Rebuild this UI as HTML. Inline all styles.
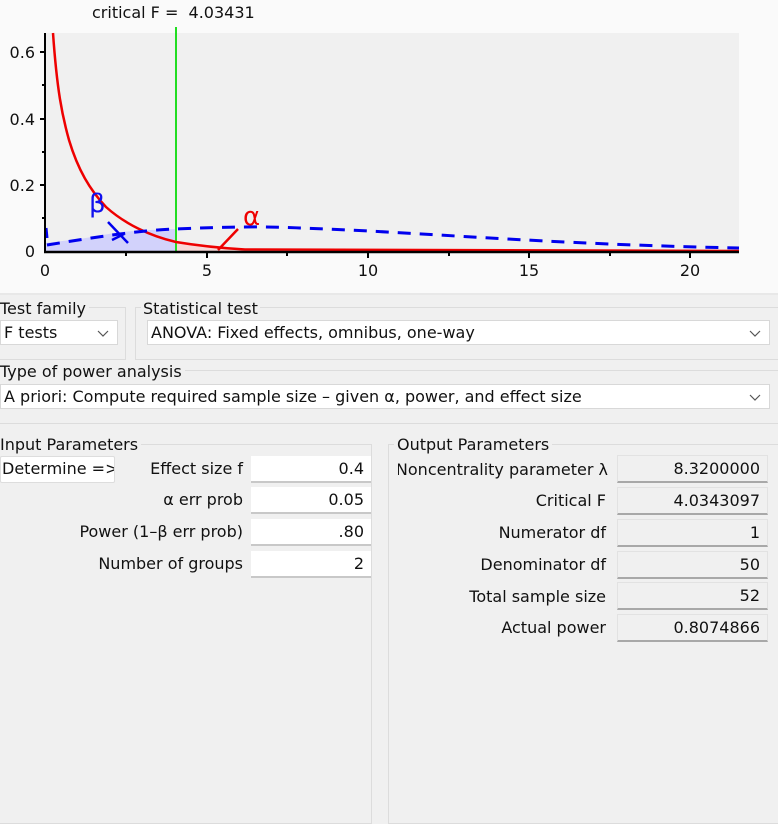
<!DOCTYPE html>
<html><head><meta charset="utf-8"><style>
*{margin:0;padding:0;box-sizing:border-box}
body{width:778px;height:806px;overflow:hidden;background:#f0f0f0;font-family:"DejaVu Sans","Liberation Sans",sans-serif;font-size:16px;color:#111;position:relative}
.a{position:absolute;white-space:nowrap}
.box{position:absolute;border:1px solid #dcdcdc}
.combo{position:absolute;background:#fff;border:1px solid #d8d8d8;height:25px;line-height:23px;padding-left:3px;white-space:nowrap;overflow:hidden}
.combo svg{position:absolute;right:8px;top:9px}
.in{position:absolute;background:#fff;border-bottom:2px solid #c8c8c8;height:27px;line-height:25px;text-align:right;padding-right:7px;width:120px;left:251px}
.out{position:absolute;background:#f0f0f0;border:1px solid #e2e2e2;border-bottom:2px solid #a8a8a8;height:28px;line-height:25px;text-align:right;padding-right:7px;width:151px;left:617px}
.lbl{position:absolute;text-align:right;height:27px;line-height:27px;white-space:nowrap}
</style></head><body>
<div class="a" style="left:0;top:0;width:778px;height:293px;background:#fafafa"></div>
<div class="a" style="left:0;top:293px;width:778px;height:2px;background:#e8e8e8"></div>
<div class="a" style="left:92px;top:3px;font-size:16px">critical F =&nbsp; 4.03431</div>
<svg class="a" style="left:0;top:0" width="778" height="290" viewBox="0 0 778 290">
<rect x="45" y="33" width="694" height="218" fill="#f0f0f0"/>
<path d="M45,243 L80,239 L120,232 L150,230 L176,229 L176,251 L45,251Z" fill="#d2d2fb"/>
<path d="M176,229 L176,242 L200,245 L230,248 L260,250 L300,251 L176,251Z" fill="#f8d8d8"/>
<line x1="176" y1="27" x2="176" y2="251" stroke="#22dd22" stroke-width="2"/>
<path d="M53,33 C57,90 62,115 69,140 C78,170 90,190 106,207 C125,224 150,236 176,242 C200,246 220,248 245,249.5 C300,250.8 400,251 739,251" fill="none" stroke="#ee0000" stroke-width="2.5"/>
<path d="M47,245 C90,238 140,230 176,229 C220,227 260,226 300,228 C360,230 420,234 490,238 C560,242 640,246 739,248" fill="none" stroke="#0000ee" stroke-width="3" stroke-dasharray="13,9"/>
<line x1="46" y1="228" x2="47" y2="238" stroke="#0000ee" stroke-width="3"/>
<line x1="108" y1="222" x2="128" y2="243" stroke="#0000ee" stroke-width="2.5"/>
<line x1="112" y1="240" x2="124" y2="234" stroke="#0000ee" stroke-width="2.5"/>
<line x1="238" y1="229" x2="218" y2="250" stroke="#ee0000" stroke-width="2.5"/>
<text x="89" y="212" font-family="DejaVu Sans,sans-serif" font-size="26" fill="#1010ee">β</text>
<text x="243" y="225" font-family="DejaVu Sans,sans-serif" font-size="26" fill="#ee0000">α</text>
<line x1="45" y1="33" x2="45" y2="252" stroke="#000" stroke-width="2"/>
<line x1="44" y1="252" x2="739" y2="252" stroke="#000" stroke-width="2.5"/>
<g stroke="#000" stroke-width="2">
<line x1="40" y1="52" x2="45" y2="52"/><line x1="40" y1="119" x2="45" y2="119"/><line x1="40" y1="185" x2="45" y2="185"/>
<line x1="42" y1="85" x2="45" y2="85"/><line x1="42" y1="152" x2="45" y2="152"/><line x1="42" y1="218" x2="45" y2="218"/>
<line x1="207" y1="252" x2="207" y2="258"/><line x1="368" y1="252" x2="368" y2="258"/><line x1="529" y1="252" x2="529" y2="258"/><line x1="690" y1="252" x2="690" y2="258"/>
<line x1="126" y1="252" x2="126" y2="256"/><line x1="287" y1="252" x2="287" y2="256"/><line x1="449" y1="252" x2="449" y2="256"/><line x1="610" y1="252" x2="610" y2="256"/>
</g>
<g font-family="DejaVu Sans,sans-serif" font-size="16" fill="#111">
<text x="35" y="58" text-anchor="end">0.6</text><text x="35" y="125" text-anchor="end">0.4</text><text x="35" y="191" text-anchor="end">0.2</text><text x="35" y="257" text-anchor="end">0</text>
<text x="45" y="276" text-anchor="middle">0</text><text x="207" y="276" text-anchor="middle">5</text><text x="368" y="276" text-anchor="middle">10</text><text x="529" y="276" text-anchor="middle">15</text><text x="690" y="276" text-anchor="middle">20</text>
</g>
</svg>

<div class="box" style="left:-2px;top:307px;width:128px;height:53px"></div>
<div class="a" style="left:0;top:299px;background:#f0f0f0;padding-right:3px">Test family</div>
<div class="combo" style="left:0;top:320px;width:118px">F tests<svg width="12" height="7"><path d="M1,1 L6,6 L11,1" fill="none" stroke="#555" stroke-width="1.2"/></svg></div>
<div class="box" style="left:135px;top:307px;width:650px;height:53px"></div>
<div class="a" style="left:141px;top:299px;background:#f0f0f0;padding:0 2px">Statistical test</div>
<div class="combo" style="left:147px;top:320px;width:623px">ANOVA: Fixed effects, omnibus, one-way<svg width="12" height="7"><path d="M1,1 L6,6 L11,1" fill="none" stroke="#555" stroke-width="1.2"/></svg></div>
<div class="box" style="left:-2px;top:370px;width:790px;height:54px"></div>
<div class="a" style="left:0;top:362px;background:#f0f0f0;padding-right:3px">Type of power analysis</div>
<div class="combo" style="left:0;top:384px;width:770px">A priori: Compute required sample size – given α, power, and effect size<svg width="12" height="7"><path d="M1,1 L6,6 L11,1" fill="none" stroke="#555" stroke-width="1.2"/></svg></div>

<div class="box" style="left:-2px;top:444px;width:374px;height:380px"></div>
<div class="a" style="left:0;top:435px;background:#f0f0f0;padding-right:3px">Input Parameters</div>
<div class="a" style="left:0;top:456px;width:115px;height:27px;background:#fff;border:1px solid #ddd;border-radius:2px;line-height:24px;padding-left:1px;overflow:hidden">Determine =&gt;</div>
<div class="lbl" style="left:100px;width:143px;top:455px">Effect size f</div>
<div class="lbl" style="left:100px;width:143px;top:486px">α err prob</div>
<div class="lbl" style="left:40px;width:203px;top:518px">Power (1–β err prob)</div>
<div class="lbl" style="left:40px;width:203px;top:550px">Number of groups</div>
<div class="in" style="top:456px">0.4</div>
<div class="in" style="top:487px">0.05</div>
<div class="in" style="top:519px">.80</div>
<div class="in" style="top:551px">2</div>

<div class="box" style="left:388px;top:444px;width:400px;height:380px"></div>
<div class="a" style="left:394px;top:435px;background:#f0f0f0;padding:0 3px">Output Parameters</div>
<div class="a" style="left:398px;top:456px;width:210px;height:27px;overflow:hidden;direction:rtl;text-align:left;line-height:27px"><span style="direction:ltr;unicode-bidi:embed">Noncentrality parameter λ</span></div>
<div class="lbl" style="left:420px;width:186px;top:487px">Critical F</div>
<div class="lbl" style="left:420px;width:186px;top:519px">Numerator df</div>
<div class="lbl" style="left:420px;width:186px;top:551px">Denominator df</div>
<div class="lbl" style="left:420px;width:186px;top:583px">Total sample size</div>
<div class="lbl" style="left:420px;width:186px;top:614px">Actual power</div>
<div class="out" style="top:455px">8.3200000</div>
<div class="out" style="top:487px">4.0343097</div>
<div class="out" style="top:519px">1</div>
<div class="out" style="top:551px">50</div>
<div class="out" style="top:582px">52</div>
<div class="out" style="top:614px">0.8074866</div>
</body></html>
